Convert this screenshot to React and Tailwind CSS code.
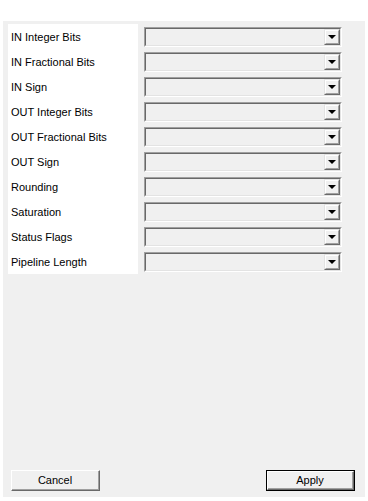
import React from "react";

const labels = [
  "IN Integer Bits",
  "IN Fractional Bits",
  "IN Sign",
  "OUT Integer Bits",
  "OUT Fractional Bits",
  "OUT Sign",
  "Rounding",
  "Saturation",
  "Status Flags",
  "Pipeline Length",
];

function Combo() {
  return (
    <div className="h-[20px] w-[198px] border-t border-l border-t-[#a0a0a0] border-l-[#a0a0a0] border-b border-r border-b-white border-r-white">
      <div className="h-full w-full flex justify-end border-t border-l border-t-[#696969] border-l-[#696969] border-b border-r border-b-[#e3e3e3] border-r-[#e3e3e3] bg-[#f0f0f0]">
        <div className="h-full w-[16px] border-t border-l border-t-[#e3e3e3] border-l-[#e3e3e3] border-b border-r border-b-[#696969] border-r-[#696969]">
          <div className="h-full w-full flex items-center justify-center border-t border-l border-t-white border-l-white border-b border-r border-b-[#a0a0a0] border-r-[#a0a0a0] bg-[#f0f0f0]">
            <div className="w-0 h-0 border-l-[4px] border-r-[4px] border-t-[4px] border-l-transparent border-r-transparent border-t-black" />
          </div>
        </div>
      </div>
    </div>
  );
}

function RaisedButton({ children, isDefault }) {
  return (
    <div className={isDefault ? "w-[89px] h-[21px] border border-black" : "w-[89px] h-[21px]"}>
      <div className="h-full w-full border-t border-l border-t-white border-l-white border-b border-r border-b-[#696969] border-r-[#696969]">
        <div className="h-full w-full flex items-center justify-center border-b border-r border-b-[#a0a0a0] border-r-[#a0a0a0] bg-[#f0f0f0] text-[11px] text-black">
          {children}
        </div>
      </div>
    </div>
  );
}

export default function App() {
  return (
    <div
      className="w-[368px] h-[501px] bg-white pt-[21px] pl-[3px] pr-[3px] pb-[4px]"
      style={{ fontFamily: '"Liberation Sans", Arial, sans-serif' }}
    >
      <div className="h-full w-full bg-[#f0f0f0] flex flex-col">
        <div className="flex pt-[3px] pl-[5px]">
          <div className="w-[130px] bg-white pt-[3px] pb-[2px] flex flex-col gap-[5px]">
            {labels.map((l) => (
              <div key={l} className="h-[20px] flex items-center pl-[3px] text-[11px] text-black">
                {l}
              </div>
            ))}
          </div>
          <div className="ml-[6px] pt-[3px] flex flex-col gap-[5px]">
            {labels.map((l) => (
              <Combo key={l} />
            ))}
          </div>
        </div>
        <div className="mt-auto mb-[6px] flex items-start justify-between pl-[8px] pr-[10px]">
          <RaisedButton>Cancel</RaisedButton>
          <RaisedButton isDefault>Apply</RaisedButton>
        </div>
      </div>
    </div>
  );
}
